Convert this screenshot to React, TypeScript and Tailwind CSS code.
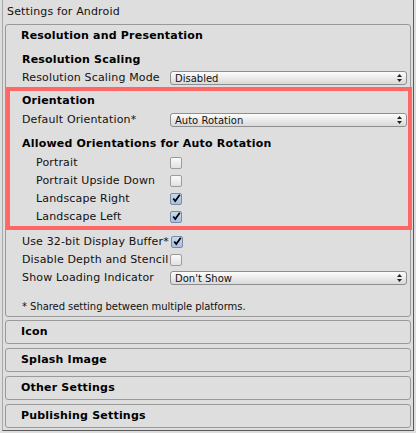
import React from "react";

const font = { fontFamily: '"DejaVu Sans", Verdana, sans-serif' };

function Dropdown(props: { value: string }) {
  return (
    <div className="flex items-center justify-between h-[14px] w-[237px] rounded-[3px] border border-[#8e8e8e] bg-gradient-to-b from-[#fdfdfd] to-[#d9d9d9] pl-[4px] pr-[4px]">
      <span className="text-[10px] leading-none text-[#111] pt-[1px]">{props.value}</span>
      <svg width="5" height="8" viewBox="0 0 5 8">
        <path d="M0 3 L2.5 0 L5 3 Z M0 5 L2.5 8 L5 5 Z" fill="#222" />
      </svg>
    </div>
  );
}

function Checkbox(props: { checked?: boolean }) {
  if (props.checked) {
    return (
      <div className="relative z-10 w-[12px] h-[12px] rounded-[2px] border border-[#7b8ba3] bg-gradient-to-b from-[#c9d8f0] to-[#a9bfe2] flex items-center justify-center">
        <svg width="11" height="11" viewBox="0 0 11 11" className="-mt-[1px] ml-[1px]">
          <path d="M1.5 5.5 L4 8.5 L9.5 1" stroke="#000" strokeWidth="2.2" fill="none" />
        </svg>
      </div>
    );
  }
  return (
    <div className="relative z-10 w-[12px] h-[12px] rounded-[2px] border border-[#9c9c9c] bg-gradient-to-b from-[#fafafa] to-[#e2e2e2]" />
  );
}

interface RowProps {
  label: string;
  labelWidth: string;
  pad: string;
  children?: React.ReactNode;
}

function Row(props: RowProps) {
  return (
    <div className={`flex items-center h-[18px] ${props.pad}`}>
      <div className={`${props.labelWidth} shrink-0 whitespace-nowrap text-[11px] tracking-[0.15px] text-[#111] pt-[1px]`}>{props.label}</div>
      {props.children}
    </div>
  );
}

function Section(props: { title: string }) {
  return (
    <div className="h-[24px] rounded-[3px] border border-[#9a9a9a] flex items-center pl-[15px] mt-[4px]">
      <span className="text-[11px] font-bold tracking-[0.2px] text-black pt-[1px]">{props.title}</span>
    </div>
  );
}

export default function App() {
  const orientations = [
    { label: "Portrait", checked: false },
    { label: "Portrait Upside Down", checked: false },
    { label: "Landscape Right", checked: true },
    { label: "Landscape Left", checked: true },
  ];

  return (
    <div className="w-[416px] h-[433px] bg-[#dedede] overflow-hidden" style={font}>
      <div className="ml-[2px] w-[412px] h-[431px] border-l border-r border-b border-l-[#a8a8a8] border-r-[#5a5a5a] border-b-[#5a5a5a]">
        <div className="h-[24px] pl-[4px] pt-[1px] flex items-center text-[11px] tracking-[0.15px] text-[#111]">Settings for Android</div>

        <div className="mx-[2px] rounded-[3px] border border-[#999999] h-[293px]">
          <div className="h-[22px] pt-[1px] flex items-center pl-[15px] text-[11px] font-bold tracking-[0.2px] text-black">
            Resolution and Presentation
          </div>
          <div className="h-[4px]" />
          <div className="h-[18px] pt-[1px] flex items-center pl-[16px] text-[11px] font-bold tracking-[0.2px] text-black">
            Resolution Scaling
          </div>
          <Row label="Resolution Scaling Mode" labelWidth="w-[148px]" pad="pl-[16px]">
            <Dropdown value="Disabled" />
          </Row>

          <div className="relative -mr-[2px] border-4 border-[#ff6666] h-[143px]">
            <div className="h-[20px] pt-[1px] flex items-center pl-[12px] text-[11px] font-bold tracking-[0.2px] text-black">Orientation</div>
            <Row label="Default Orientation*" labelWidth="w-[148px]" pad="pl-[12px]">
              <Dropdown value="Auto Rotation" />
            </Row>
            <div className="h-[25px] pt-[5px] flex items-center pl-[12px] text-[11px] font-bold tracking-[0.2px] text-black">
              Allowed Orientations for Auto Rotation
            </div>
            {orientations.map((o, i) => (
              <Row key={`orient-${i}`} label={o.label} labelWidth="w-[134px]" pad="pl-[26px]">
                <Checkbox checked={o.checked} />
              </Row>
            ))}
          </div>

          <div className="h-[3px]" />
          <Row label="Use 32-bit Display Buffer*" labelWidth="w-[149px]" pad="pl-[16px]">
            <Checkbox checked />
          </Row>
          <Row label="Disable Depth and Stencil" labelWidth="w-[148px]" pad="pl-[16px]">
            <Checkbox />
          </Row>
          <Row label="Show Loading Indicator" labelWidth="w-[148px]" pad="pl-[16px]">
            <Dropdown value="Don't Show" />
          </Row>
          <div className="h-[28px] pt-[11px] flex items-center pl-[16px] text-[10px] tracking-[-0.05px] text-[#111]">
            * Shared setting between multiple platforms.
          </div>
        </div>

        <div className="mx-[2px] -mt-[1px]">
          <Section title="Icon" />
          <Section title="Splash Image" />
          <Section title="Other Settings" />
          <Section title="Publishing Settings" />
        </div>
      </div>
    </div>
  );
}
